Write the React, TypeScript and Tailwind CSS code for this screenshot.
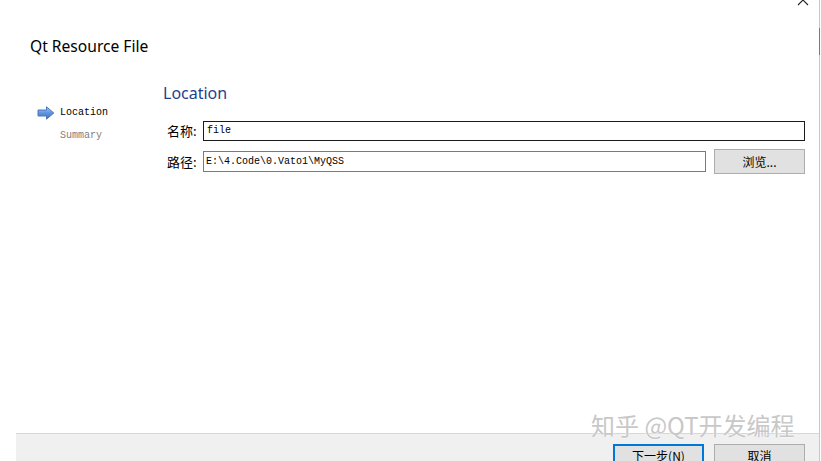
import React from "react";

const cjk = { fontFamily: '"Noto Sans CJK SC", "Noto Sans", sans-serif' };
const ui = { fontFamily: '"Noto Sans", "Noto Sans CJK SC", sans-serif' };
const mono = { fontFamily: '"Liberation Mono", "Noto Sans CJK SC", monospace' };

function ArrowIcon() {
  return (
    <svg width="18" height="14" viewBox="0 0 18 14">
      <defs>
        <linearGradient id="ag" x1="0" y1="0" x2="0" y2="1">
          <stop offset="0" stopColor="#a9c8f0" />
          <stop offset="0.5" stopColor="#5f93dc" />
          <stop offset="1" stopColor="#3f74c6" />
        </linearGradient>
      </defs>
      <path
        d="M1 4 H9.5 V0.8 L16.8 7 L9.5 13.2 V10 H1 Z"
        fill="url(#ag)"
        stroke="#4a78c0"
        strokeWidth="1"
        strokeLinejoin="round"
      />
    </svg>
  );
}

export default function App() {
  return (
    <div className="relative w-[821px] h-[461px] bg-white overflow-hidden">
      <div className="w-[820px] h-[461px] border-r border-[#c8c8c8] flex flex-col relative">
        {/* close glyph cut at top */}
        <svg className="absolute left-[797px] top-[-6px]" width="12" height="12" viewBox="0 0 12 12">
          <path d="M1 1 L11 11 M11 1 L1 11" stroke="#222" strokeWidth="1.1" />
        </svg>
        {/* accent segment on right edge */}
        <div className="absolute right-[-1px] top-[28px] w-[1px] h-[27px] bg-[#3a8fb0]" />

        {/* header */}
        <div className="h-[82px] pt-[35px] pl-[30px]">
          <div className="text-[15.6px] leading-[22px] text-black" style={ui}>
            Qt Resource File
          </div>
        </div>

        {/* body */}
        <div className="flex flex-1">
          {/* sidebar */}
          <div className="w-[163px] pl-[37px] pt-[24px]">
            <div className="flex items-center h-[14px] gap-[5px]">
              <ArrowIcon />
              <span className="text-[10px] leading-[14px] text-black" style={mono}>
                Location
              </span>
            </div>
            <div className="flex items-center h-[14px] mt-[9px] pl-[23px]">
              <span className="text-[10px] leading-[14px] text-[#808080]" style={mono}>
                Summary
              </span>
            </div>
          </div>

          {/* main */}
          <div className="flex-1 pr-[14px]">
            <div className="h-[22px] text-[16px] leading-[22px] text-[#1f3f8e]" style={ui}>
              Location
            </div>
            <div className="mt-[17px] flex items-center h-[20px]">
              <div className="w-[40px] pl-[4px] text-[13px] leading-[20px] text-black" style={cjk}>
                名称:
              </div>
              <div className="flex-1 h-[20px] border border-[#1a1a1a] bg-white flex items-center pl-[3px]">
                <span className="text-[10px] leading-[14px] text-black" style={mono}>
                  file
                </span>
              </div>
            </div>
            <div className="mt-[8px] flex items-center h-[25px]">
              <div className="w-[40px] pl-[4px] text-[13px] leading-[20px] text-black" style={cjk}>
                路径:
              </div>
              <div className="flex-1 h-[21px] border border-[#7a7a7a] bg-white flex items-center pl-[2px]">
                <span className="text-[10px] leading-[14px] text-black" style={mono}>
                  E:\4.Code\0.Vato1\MyQSS
                </span>
              </div>
              <div
                className="ml-[8px] w-[91px] h-[25px] bg-[#e1e1e1] border border-[#adadad] flex items-center justify-center text-[12px] text-black"
                style={cjk}
              >
                浏览...
              </div>
            </div>
          </div>
        </div>

        {/* footer */}
        <div className="ml-[16px] h-[28px] bg-[#f0f0f0] border-t border-[#d6d6d6] flex justify-end items-start gap-[10px] pr-[14px] pt-[10px] overflow-hidden">
          <div
            className="w-[91px] h-[24px] bg-[#e1e1e1] border-2 border-[#0078d7] flex items-center justify-center text-[12px] leading-[16px] text-black"
            style={cjk}
          >
            下一步(N)
          </div>
          <div
            className="w-[91px] h-[24px] bg-[#e1e1e1] border border-[#adadad] flex items-center justify-center text-[12px] leading-[16px] text-black"
            style={cjk}
          >
            取消
          </div>
        </div>

        {/* watermark */}
        <div
          className="absolute left-[591px] top-[409px] text-[24px] leading-[32px] text-[#c8c8c8] whitespace-nowrap"
          style={{ ...cjk, textShadow: "0 0 1px #ffffff, 0 0 2px #ffffff" }}
        >
          知乎 @QT开发编程
        </div>
      </div>
    </div>
  );
}
